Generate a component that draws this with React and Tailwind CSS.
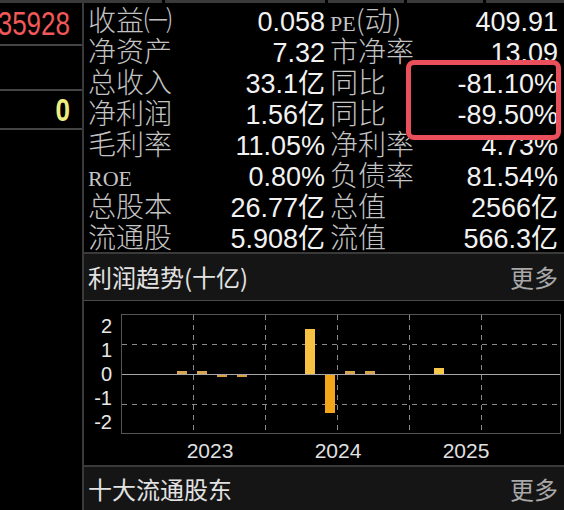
import React from 'react'

const CJK = "font-['Noto_Sans_CJK_SC',sans-serif]"
const NUM = "font-['Liberation_Sans','Noto_Sans_CJK_SC',sans-serif]"
const SERIF = "font-['Liberation_Serif',serif]"

const ROWS = [
  { a: [['收益㈠']], av: '0.058', b: [['PE', true], ['(动)']], bv: '409.91' },
  { a: [['净资产']], av: '7.32', b: [['市净率']], bv: '13.09' },
  { a: [['总收入']], av: '33.1亿', b: [['同比']], bv: '-81.10%', boxed: true },
  { a: [['净利润']], av: '1.56亿', b: [['同比']], bv: '-89.50%', boxed: true },
  { a: [['毛利率']], av: '11.05%', b: [['净利率']], bv: '4.73%' },
  { a: [['ROE', true]], av: '0.80%', b: [['负债率']], bv: '81.54%' },
  { a: [['总股本']], av: '26.77亿', b: [['总值']], bv: '2566亿' },
  { a: [['流通股']], av: '5.908亿', b: [['流值']], bv: '566.3亿' }
]

// bars in chart pixel coords: x, height (positive = up from zero line)
const BARS = [
  { x: 55, h: 3, c: '#d9a450' },
  { x: 75, h: 3, c: '#d9a450' },
  { x: 95, h: -2, c: '#d99a40' },
  { x: 115, h: -2, c: '#d99a40' },
  { x: 183, h: 45, c: '#f7c244' },
  { x: 203, h: -38, c: '#f3a61a' },
  { x: 223, h: 3, c: '#d9a450' },
  { x: 243, h: 3, c: '#d9a450' },
  { x: 312, h: 6, c: '#f5c84a' }
]

function Label({ parts }) {
  return (
    <span className="text-[#c4c4c4] whitespace-nowrap">
      {parts.map(([t, serif], i) => (
        <span key={i} className={serif ? `${SERIF} text-[22px]` : `${CJK} text-[28px] font-light`}>{t}</span>
      ))}
    </span>
  )
}

function Value({ v, front }) {
  return (
    <span className={`${NUM} text-[27px] text-[#f2f2f2] whitespace-nowrap ${front ? 'relative z-10' : ''}`}>{v}</span>
  )
}

function Chart() {
  const zero = 59
  return (
    <svg width="438" height="118" className="block">
      {[71, 143, 215, 287, 359].map(x => (
        <line key={x} x1={x + 0.5} y1="0" x2={x + 0.5} y2="118" stroke="#8a8a8a" strokeDasharray="5 5" />
      ))}
      {[29, 89].map(y => (
        <line key={y} x1="0" y1={y + 0.5} x2="438" y2={y + 0.5} stroke="#8a8a8a" strokeDasharray="5 5" />
      ))}
      <line x1="0" y1={zero + 0.5} x2="438" y2={zero + 0.5} stroke="#a8a8a8" />
      {BARS.map((b, i) => (
        <rect key={i} x={b.x} width="10" y={b.h > 0 ? zero - b.h : zero + 1} height={Math.abs(b.h)} fill={b.c} />
      ))}
    </svg>
  )
}

export default function App() {
  return (
    <div className="relative w-[564px] h-[510px] overflow-hidden bg-black flex">
      {/* left quote column */}
      <div className="w-[84px] shrink-0 border-r-2 border-[#3a3a3a] flex flex-col">
        <div className="h-[3px] bg-[#3a3a3a]" />
        <div className="h-[43px] border-b-2 border-[#444] flex items-center justify-end pr-[12px]">
          <span className={`${NUM} inline-block scale-y-[1.25] text-[26px] leading-none text-[#f25858]`}>35928</span>
        </div>
        <div className="h-[45px] border-b-2 border-[#444]" />
        <div className="h-[39px] border-b-2 border-[#444] flex items-center justify-end pr-[12px]">
          <span className={`${NUM} inline-block scale-y-[1.2] text-[26px] font-bold leading-none text-[#eeee80]`}>0</span>
        </div>
      </div>

      {/* right column */}
      <div className="flex-1 flex flex-col">
        <div className="h-[4px] flex gap-[3px] items-start">
          <div className="h-[3px] w-[78px] bg-[#3a3a3a]" />
          <div className="h-[3px] w-[160px] bg-[#3a3a3a]" />
          <div className="h-[3px] w-[76px] bg-[#3a3a3a]" />
          <div className="h-[3px] w-[76px] bg-[#3a3a3a]" />
          <div className="h-[3px] flex-1 bg-[#3a3a3a]" />
        </div>

        <div className="h-[249px] flex flex-col">
          {ROWS.map((r, i) => (
            <div key={i} className="h-[31px] flex items-baseline pl-[4px] pr-[6px] leading-[31px]">
              <div className="w-[237px] flex items-baseline justify-between">
                <Label parts={r.a} />
                <Value v={r.av} />
              </div>
              <div className="ml-[5px] flex-1 flex items-baseline justify-between">
                <Label parts={r.b} />
                <Value v={r.bv} front={r.boxed} />
              </div>
            </div>
          ))}
        </div>

        <div className="h-[2px] bg-[#3a3a3a]" />
        <div className="h-[49px] bg-[#151515] border-b border-[#4a4a4a] flex items-center justify-between pl-[4px] pr-[6px]">
          <span className={`${CJK} text-[24px] leading-none text-[#e2e2e2]`}>利润趋势(十亿)</span>
          <span className={`${CJK} text-[24px] leading-none text-[#a8a8a8]`}>更多</span>
        </div>

        <div className="h-[169px] pt-[13px] flex flex-col">
          <div className="flex">
            <div className={`w-[37px] h-[120px] pr-[9px] py-[2px] flex flex-col justify-between items-end ${NUM} text-[20px] leading-none text-[#e8e8e8]`}>
              <span>2</span>
              <span>1</span>
              <span>0</span>
              <span>-1</span>
              <span>-2</span>
            </div>
            <div className="w-[440px] h-[120px] border border-[#555]">
              <Chart />
            </div>
          </div>
          <div className={`flex pl-[62px] mt-[6px] ${NUM} text-[21px] leading-none text-[#e0e0e0]`}>
            <span className="w-[128px] text-center">2023</span>
            <span className="w-[128px] text-center">2024</span>
            <span className="w-[128px] text-center">2025</span>
          </div>
        </div>

        <div className="h-[2px] bg-[#3a3a3a]" />
        <div className="h-[44px] bg-[#151515] flex items-center justify-between pl-[4px] pr-[6px]">
          <span className={`${CJK} text-[24px] leading-none text-[#e2e2e2]`}>十大流通股东</span>
          <span className={`${CJK} text-[24px] leading-none text-[#a8a8a8]`}>更多</span>
        </div>
      </div>

      {/* annotation box */}
      <div className="absolute left-[406px] top-[60px] w-[155px] h-[80px] rounded-[8px] bg-black z-[5]" />
      <div className="absolute left-[406px] top-[60px] w-[155px] h-[80px] rounded-[8px] border-[5px] border-[#e9505c] z-20 pointer-events-none" />
    </div>
  )
}
